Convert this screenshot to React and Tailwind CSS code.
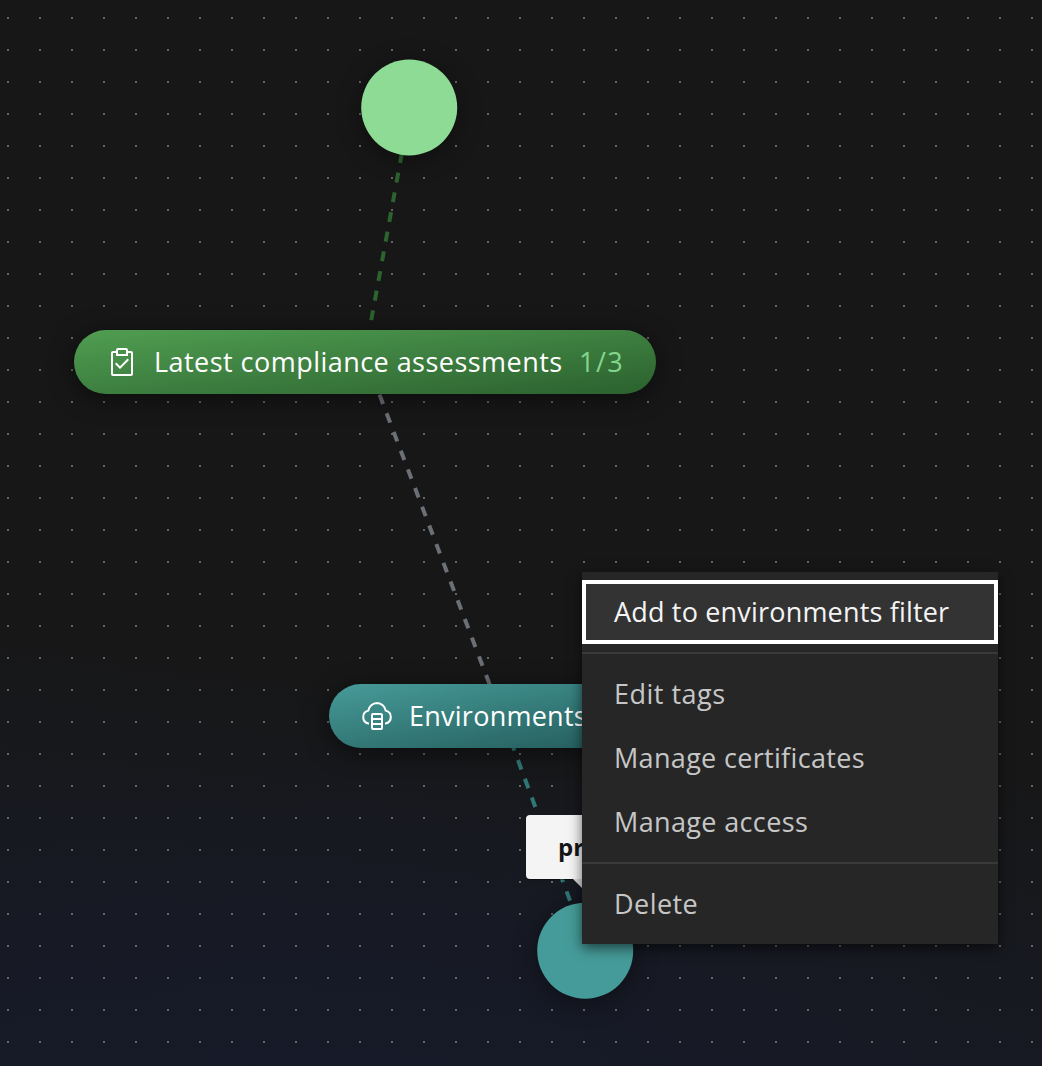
const links = [
  { x1: 401.9, y1: 153, x2: 370.9, y2: 322, color: "#2c632f" },
  { x1: 379.5, y1: 394.6, x2: 491, y2: 688, color: "#6b6f76" },
  { x1: 511, y1: 741.3, x2: 572, y2: 906, color: "#2f7674" },
];

function ClipboardIcon() {
  return (
    <svg viewBox="0 0 32 32" className="size-8 shrink-0 fill-white">
      <path d="M14 20.18 10.41 16.59 9 18l5 5 9-9-1.41-1.42z" />
      <path d="M25 5h-3V4a2 2 0 0 0-2-2h-8a2 2 0 0 0-2 2v1H7a2 2 0 0 0-2 2v21a2 2 0 0 0 2 2h18a2 2 0 0 0 2-2V7a2 2 0 0 0-2-2ZM12 4h8v4h-8Zm13 24H7V7h3v3h12V7h3Z" />
    </svg>
  );
}

function CloudIcon() {
  return (
    <svg viewBox="0 0 32 32" className="size-8 shrink-0" fill="none" stroke="white" strokeWidth="2">
      <path d="M8 23.5h-.5A6.6 6.6 0 0 1 7.3 10.6 9 9 0 0 1 16 3a9 9 0 0 1 8.7 7.6 6.6 6.6 0 0 1-.2 12.9H24" />
      <rect x="11" y="14" width="10" height="15" rx="1" />
      <path d="M11 19h10M11 24h10" />
    </svg>
  );
}

function MenuItem({ children, className = "" }) {
  return (
    <button className={"flex h-16 w-full shrink-0 items-center px-8 text-left whitespace-nowrap " + className}>
      {children}
    </button>
  );
}

export default function App() {
  return (
    <main className="relative h-[1066px] w-[1042px] overflow-hidden bg-[#171717] font-['Open_Sans',sans-serif] text-[27px] leading-9">
      <div className="absolute inset-0 bg-[linear-gradient(8deg,#171a25_0%,#17191f_20%,#171717_38%)]" />
      <div className="absolute inset-0 bg-[radial-gradient(ellipse_800px_330px_at_330px_1090px,#161a28_0%,transparent_100%)]" />
      <div className="absolute inset-0 bg-[linear-gradient(#646464,#646464)] [mask-image:linear-gradient(90deg,#000_2px,transparent_2px),linear-gradient(#000_2px,transparent_2px)] [mask-size:32px_32px] [mask-position:7px_17px] [mask-composite:intersect]" />

      <svg viewBox="0 0 1042 1066" className="absolute inset-0 size-full">
        {links.map((l) => (
          <line key={l.y1} x1={l.x1} y1={l.y1} x2={l.x2} y2={l.y2} stroke={l.color} strokeWidth="4" strokeDasharray="10 10" />
        ))}
      </svg>

      <div className="absolute top-[59px] left-[361px] size-24 translate-x-[0.2px] translate-y-[0.5px] rounded-full bg-[#8edb95] shadow-[0_4px_24px_rgba(0,0,0,0.4)]" />

      <div className="absolute top-[330px] left-[74px] flex h-16 w-[582px] items-center rounded-full bg-[linear-gradient(to_bottom_right,#509e52,#2b612e)] pl-8 whitespace-nowrap text-white shadow-[0_4px_24px_rgba(0,0,0,0.5)]">
        <ClipboardIcon />
        <span className="ml-4 w-[425px] tracking-[0.46px]">Latest compliance assessments</span>
        <span className="tracking-[1.5px] text-[#83d68c]">1/3</span>
      </div>

      <div className="absolute top-[684px] left-[329px] flex h-16 w-[370px] items-center rounded-full bg-[linear-gradient(to_bottom_right,#469b99,#205655)] pl-8 whitespace-nowrap text-white shadow-[0_4px_24px_rgba(0,0,0,0.5)]">
        <CloudIcon />
        <span className="ml-4 tracking-[0.25px]">Environments</span>
      </div>

      <div className="absolute top-[903px] left-[537px] size-24 translate-x-[0.2px] translate-y-[-0.3px] rounded-full bg-[#459b99] shadow-[0_4px_24px_rgba(0,0,0,0.4)]" />

      <div className="absolute top-[815px] left-[526px] flex h-16 w-[118px] items-center rounded bg-[#f4f4f4] pl-8 text-2xl font-bold text-[#161616] shadow-[0_1px_1px_rgba(0,0,0,0.5)]">
        pr
        <svg viewBox="0 0 24 12" className="absolute top-16 left-[47px] h-3 w-6 fill-[#d8d8d8]">
          <path d="M0 0h24L12 12z" />
        </svg>
      </div>

      <nav className="absolute top-[572px] left-[582px] flex w-[416px] flex-col bg-[#262626] py-2 text-[#c6c6c6] shadow-[0_4px_12px_rgba(0,0,0,0.6)]">
        <MenuItem className="bg-[#333333] text-[#f4f4f4] tracking-[0.18px] inset-ring-4 inset-ring-white">Add to environments filter</MenuItem>
        <hr className="my-2 border-t-2 border-[#393939]" />
        <MenuItem className="tracking-[0.5px]">Edit tags</MenuItem>
        <MenuItem className="tracking-[0.32px]">Manage certificates</MenuItem>
        <MenuItem className="tracking-[0.36px]">Manage access</MenuItem>
        <hr className="my-2 border-t-2 border-[#393939]" />
        <MenuItem className="tracking-[0.45px]">Delete</MenuItem>
      </nav>
    </main>
  );
}
